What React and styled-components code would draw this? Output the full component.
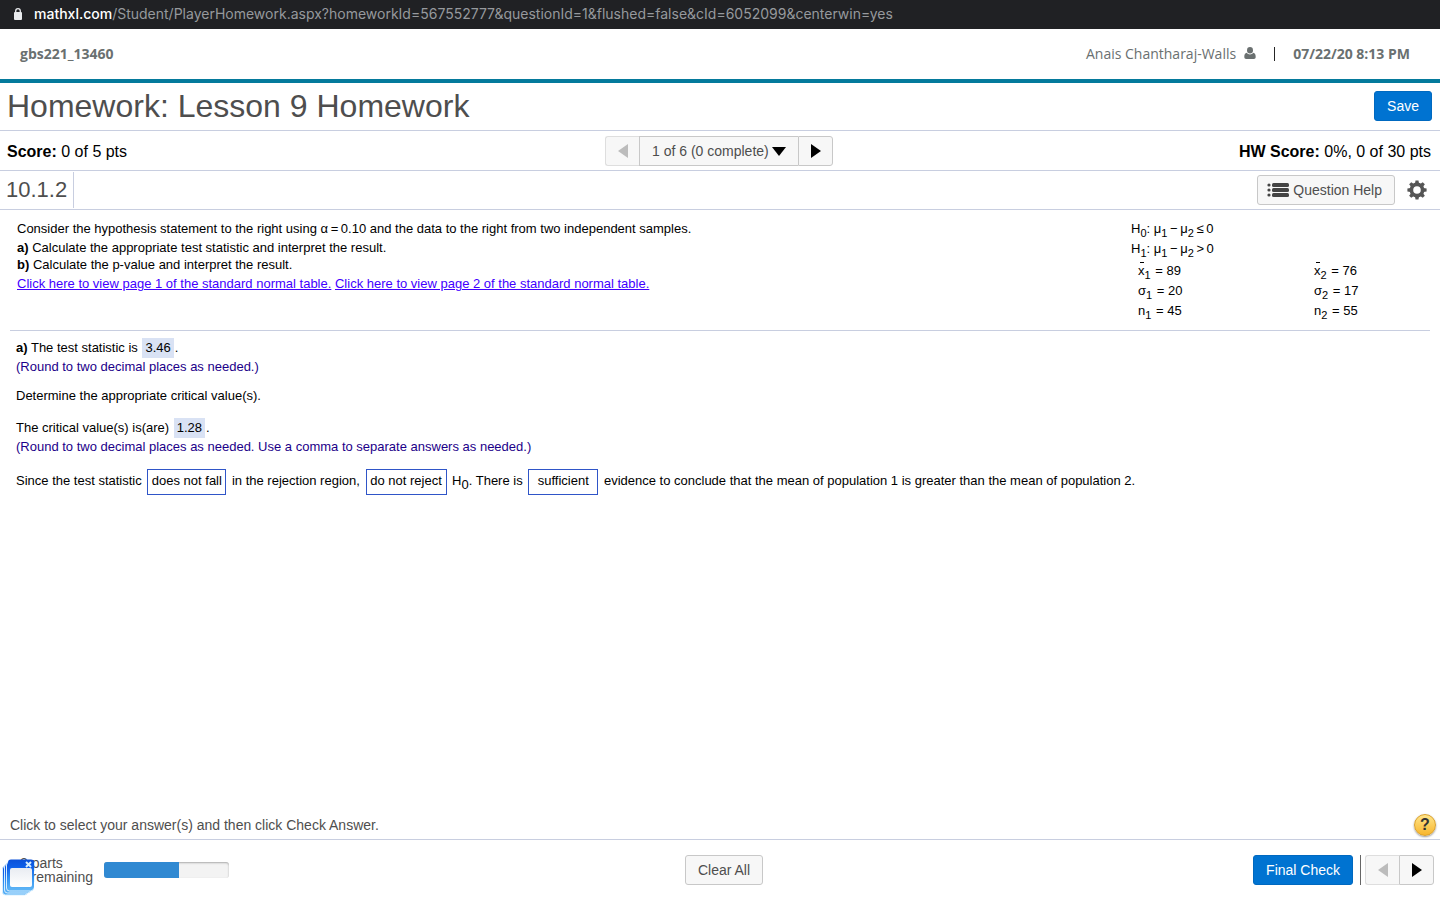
import React, { useState } from "react";
import styled, { createGlobalStyle } from "styled-components";

const GlobalStyle = createGlobalStyle`
  * {
    box-sizing: border-box;
  }
  body {
    margin: 0;
    background: #fff;
    color: #000;
    font-family: "Liberation Sans", Arial, sans-serif;
    font-size: 13px;
  }
  button, select, input {
    font-family: inherit;
    margin: 0;
  }
  h1, h2, p {
    margin: 0;
    font-weight: normal;
  }
`;

const rows = [
  { id: "x", symbol: "x", bar: true, first: 89, second: 76 },
  { id: "sigma", symbol: "σ", first: 20, second: 17 },
  { id: "n", symbol: "n", first: 45, second: 55 },
];

function Triangle({ dir }) {
  const points = {
    left: "10,0 10,14 0,7",
    right: "0,0 0,14 10,7",
  };
  return (
    <svg width="10" height="14" viewBox="0 0 10 14" aria-hidden="true">
      <polygon points={points[dir]} fill="currentColor" />
    </svg>
  );
}

function LockIcon() {
  return (
    <svg width="10" height="12" viewBox="0 0 10 12" aria-hidden="true">
      <rect x="1" y="4" width="8" height="8" rx="1" fill="#e8eaed" />
      <path d="M2.7 5V3a2.3 2.3 0 0 1 4.6 0v2" fill="none" stroke="#e8eaed" strokeWidth="1.3" />
    </svg>
  );
}

function PersonIcon() {
  return (
    <svg width="12" height="12" viewBox="0 0 12 12" fill="#6a7070" aria-hidden="true">
      <ellipse cx="6" cy="3.3" rx="3" ry="3.3" />
      <path d="M2.8 5.8C1 6.2.3 7.6.3 10c0 1.3.7 2 1.8 2h7.8c1.1 0 1.8-.7 1.8-2 0-2.4-.7-3.8-2.5-4.2C8.5 6.8 7.3 7.4 6 7.4S3.5 6.800 2.800 5.800z" />
    </svg>
  );
}

function ListIcon() {
  const lines = [0, 5, 10];
  return (
    <svg width="22" height="14" viewBox="0 0 22 14" fill="#444" aria-hidden="true">
      {lines.map((y) => (
        <g key={y}>
          <circle cx="2" cy={y + 2} r="1.6" />
          <rect x="5" y={y} width="17" height="4" rx="1.5" />
        </g>
      ))}
    </svg>
  );
}

function GearIcon() {
  const teeth = [0, 45, 90, 135, 180, 225, 270, 315];
  return (
    <svg width="20" height="20" viewBox="0 0 20 20" aria-hidden="true">
      <circle cx="10" cy="10" r="5.6" fill="none" stroke="#555" strokeWidth="3.6" />
      {teeth.map((t) => (
        <path key={t} d="M8 3.5 8.5.4h3l.5 3.1z" fill="#555" transform={`rotate(${t} 10 10)`} />
      ))}
    </svg>
  );
}

function WindowsIcon() {
  return (
    <svg width="34" height="37" viewBox="0 0 34 37" aria-hidden="true">
      <defs>
        <linearGradient id="frame" x1="0" y1="0" x2="0" y2="1">
          <stop offset="0" stopColor="#0a50d8" />
          <stop offset="0.25" stopColor="#0d5ee8" />
          <stop offset="0.6" stopColor="#2f8ff2" />
          <stop offset="1" stopColor="#5db4f5" />
        </linearGradient>
        <linearGradient id="pane" x1="0" y1="0" x2="0" y2="1">
          <stop offset="0" stopColor="#e9ecf2" />
          <stop offset="1" stopColor="#fff" />
        </linearGradient>
      </defs>
      <rect x="0.5" y="7" width="25" height="29" rx="3" fill="url(#frame)" stroke="#d8efff" />
      <rect x="2.5" y="5" width="26" height="29" rx="3" fill="url(#frame)" stroke="#d8efff" />
      <rect x="4.5" y="3" width="27" height="29" rx="3" fill="url(#frame)" stroke="#d8efff" />
      <rect x="6" y="0.5" width="26" height="30" rx="3" fill="url(#frame)" />
      <rect x="8" y="9" width="22" height="19" rx="2" fill="url(#pane)" />
      <path d="m24 3 5 5m0-5-5 5" stroke="#d8efff" strokeWidth="2" />
    </svg>
  );
}

function Mu({ n }) {
  return (
    <>
      μ<Sub>{n}</Sub>
    </>
  );
}

export default function App() {
  const [question, setQuestion] = useState("1");

  return (
    <Page>
      <GlobalStyle />
      <AddressBar>
        <LockIcon />
        <div>
          <b>mathxl.com</b>
          /Student/PlayerHomework.aspx?homeworkId=567552777&questionId=1&flushed=false&cId=6052099&centerwin=yes
        </div>
      </AddressBar>

      <CourseBar>
        <b>gbs221_13460</b>
        <UserInfo>
          <span>Anais Chantharaj-Walls</span>
          <PersonIcon />
          <Divider />
          <b>07/22/20 8:13 PM</b>
        </UserInfo>
      </CourseBar>

      <TitleBar>
        <h1>Homework: Lesson 9 Homework</h1>
        <Button $primary>Save</Button>
      </TitleBar>

      <ScoreBar>
        <p><b>Score:</b> 0 of 5 pts</p>
        <ButtonGroup>
          <Button $arrow disabled aria-label="Previous question"><Triangle dir="left" /></Button>
          <SelectWrap>
            <QuestionSelect
              aria-label="Question"
              value={question}
              onChange={(e) => setQuestion(e.target.value)}
            >
              <option value="1">1 of 6 (0 complete)</option>
            </QuestionSelect>
            <svg width="14" height="9" viewBox="0 0 14 9" aria-hidden="true">
              <polygon points="0,0 14,0 7,9" />
            </svg>
          </SelectWrap>
          <Button $arrow aria-label="Next question"><Triangle dir="right" /></Button>
        </ButtonGroup>
        <p><b>HW Score:</b> 0%, 0 of 30 pts</p>
      </ScoreBar>

      <ExerciseBar>
        <h2>10.1.2</h2>
        <Tools>
          <Button $withIcon><ListIcon />Question Help</Button>
          <IconButton aria-label="Settings"><GearIcon /></IconButton>
        </Tools>
      </ExerciseBar>

      <Main>
        <Problem>
          <Statement>
            <Line $h={20}>
              Consider the hypothesis statement to the right using α&thinsp;=&thinsp;0.10 and the data to the
              right from two independent samples.
            </Line>
            <Line $h={18}><b>a)</b> Calculate the appropriate test statistic and interpret the result.</Line>
            <Line $h={16}><b>b)</b> Calculate the p-value and interpret the result.</Line>
            <Line $h={22}>
              <TableLink href="#table1">Click here to view page 1 of the standard normal table.</TableLink>{" "}
              <TableLink href="#table2">Click here to view page 2 of the standard normal table.</TableLink>
            </Line>
          </Statement>
          <Data>
            <Line $h={20}>
              H<Sub>0</Sub>: <Mu n={1} />&thinsp;−&thinsp;<Mu n={2} />&thinsp;≤&thinsp;0
            </Line>
            <Line $h={20}>
              H<Sub>1</Sub>: <Mu n={1} />&thinsp;−&thinsp;<Mu n={2} />&thinsp;&gt;&thinsp;0
            </Line>
            <Samples>
              <tbody>
                {rows.map((row) => (
                  <tr key={row.id}>
                    <td><Symbol $bar={row.bar}>{row.symbol}</Symbol><Sub>1</Sub> = {row.first}</td>
                    <td><Symbol $bar={row.bar}>{row.symbol}</Symbol><Sub>2</Sub> = {row.second}</td>
                  </tr>
                ))}
              </tbody>
            </Samples>
          </Data>
        </Problem>

        <Work>
          <Line $h={20}><b>a)</b> The test statistic is <Answer>3.46</Answer>.</Line>
          <Line $h={18} $hint>(Round to two decimal places as needed.)</Line>
          <Gap $h={10} />
          <Line $h={20}>Determine the appropriate critical value(s).</Line>
          <Gap $h={12} />
          <Line $h={20}>The critical value(s) is(are) <Answer>1.28</Answer>.</Line>
          <Line $h={18} $hint>
            (Round to two decimal places as needed. Use a comma to separate answers as needed.)
          </Line>
          <Conclusion>
            Since the test statistic <Choice $w={79}>does not fall</Choice> in the rejection region,{" "}
            <Choice $w={81}>do not reject</Choice> H<Sub $large>0</Sub>. There is{" "}
            <Choice $w={70}>sufficient</Choice> evidence to conclude that the mean of population 1 is greater
            than the mean of population 2.
          </Conclusion>
        </Work>
      </Main>

      <HelpLine>
        <p>Click to select your answer(s) and then click Check Answer.</p>
        <HelpButton aria-label="Help">?</HelpButton>
      </HelpLine>

      <Footer>
        <Remaining>
          <PartsLabel>
            <span>2 parts</span>
            <span>remaining</span>
            <Overlay><WindowsIcon /></Overlay>
          </PartsLabel>
          <Progress><ProgressFill style={{ width: "60%" }} /></Progress>
        </Remaining>
        <Button>Clear All</Button>
        <FooterActions>
          <Button $primary>Final Check</Button>
          <FooterNav>
            <ButtonGroup>
              <Button $arrow disabled aria-label="Previous part"><Triangle dir="left" /></Button>
              <Button $arrow aria-label="Next part"><Triangle dir="right" /></Button>
            </ButtonGroup>
          </FooterNav>
        </FooterActions>
      </Footer>
    </Page>
  );
}

const Page = styled.div`
  min-height: 100vh;
  display: flex;
  flex-direction: column;
`;

const AddressBar = styled.div`
  height: 29px;
  padding: 0 13px 2px;
  display: flex;
  align-items: center;
  gap: 11px;
  background: #202124;
  color: #96999d;
  font-family: Inter, sans-serif;
  font-size: 14px;
  white-space: nowrap;

  b {
    color: #fff;
    font-weight: 500;
  }
`;

const CourseBar = styled.header`
  height: 54px;
  padding: 0 30px 2px 20px;
  display: flex;
  align-items: center;
  justify-content: space-between;
  border-bottom: 4px solid #047a9c;
  color: #6a7070;
  font-family: "Open Sans", sans-serif;
  font-size: 14px;
`;

const UserInfo = styled.div`
  display: flex;
  align-items: center;

  svg {
    margin: 0 18px 0 8px;
  }
`;

const Divider = styled.span`
  width: 1px;
  height: 14px;
  margin: 2px 18px 0 0;
  background: #252525;
`;

const TitleBar = styled.div`
  height: 48px;
  padding: 0 8px 2px 7px;
  display: flex;
  align-items: center;
  justify-content: space-between;
  border-bottom: 1px solid #c8cee0;

  h1 {
    padding-top: 2px;
    color: #4e4e4e;
    font-size: 32px;
  }
`;

const ScoreBar = styled.div`
  height: 40px;
  padding: 0 9px 0 7px;
  display: grid;
  grid-template-columns: 1fr auto 1fr;
  align-items: center;
  border-bottom: 1px solid #c8cee0;
  font-size: 16px;

  p {
    padding-top: 2px;
  }
  p:last-child {
    text-align: right;
  }
`;

const ExerciseBar = styled.div`
  height: 39px;
  padding-right: 13px;
  display: flex;
  align-items: center;
  justify-content: space-between;
  border-bottom: 1px solid #c8cee0;

  h2 {
    padding: 0 6px;
    border-right: 1px solid #c8cee0;
    color: #4e4e4e;
    font-size: 22px;
    line-height: 36px;
  }
`;

const Tools = styled.div`
  display: flex;
  align-items: center;
  gap: 12px;
`;

const Button = styled.button`
  height: 30px;
  padding: 0 12px;
  ${({ $withIcon }) => $withIcon && "padding-left: 9px;"}
  ${({ $arrow }) => $arrow && "padding: 0; width: 35px;"}
  display: inline-flex;
  align-items: center;
  justify-content: center;
  gap: 4px;
  border: 1px solid ${({ $primary }) => ($primary ? "#0069c0" : "#c8c8c8")};
  border-radius: 3px;
  background: ${({ $primary }) => ($primary ? "#0073d1" : "#f7f7f7")};
  color: ${({ $primary, $arrow }) => ($primary ? "#fff" : $arrow ? "#000" : "#4e4e4e")};
  font-size: 14px;
  font-weight: ${({ $primary }) => ($primary ? 500 : 400)};
  white-space: nowrap;
  cursor: pointer;

  &:disabled {
    border-color: #dedede;
    color: #bcbcbc;
    cursor: default;
  }
`;

const IconButton = styled.button`
  padding: 0;
  display: flex;
  border: 0;
  background: none;
  cursor: pointer;
`;

const ButtonGroup = styled.div`
  display: flex;

  > button:first-child {
    width: 34px;
    border-radius: 3px 0 0 3px;
    border-right: 0;
  }
  > button:last-child {
    border-radius: 0 3px 3px 0;
  }
`;

const SelectWrap = styled.div`
  display: grid;
  align-items: center;
  height: 30px;
  border: 1px solid #c8c8c8;
  border-right: 0;
  background: #f7f7f7;

  > * {
    grid-area: 1 / 1;
  }
  svg {
    justify-self: end;
    margin: 2px 12px 0 0;
    pointer-events: none;
  }
`;

const QuestionSelect = styled.select`
  appearance: none;
  height: 28px;
  padding: 0 29px 0 12px;
  border: 0;
  background: transparent;
  color: #4e4e4e;
  font-size: 14px;
`;

const Main = styled.main`
  flex: 1;
  padding: 9px 10px;
`;

const Problem = styled.section`
  display: flex;
  justify-content: space-between;
  min-height: 112px;
  padding: 0 0 0 7px;
  border-bottom: 1px solid #c8cee0;
`;

const Statement = styled.div`
  flex: 1;
`;

const Data = styled.div`
  width: 299px;
`;

const Line = styled.div`
  height: ${({ $h }) => $h}px;
  line-height: ${({ $h }) => $h}px;
  color: ${({ $hint }) => ($hint ? "#1c0089" : "inherit")};
`;

const TableLink = styled.a`
  color: #4200ff;
`;

const Sub = styled.sub`
  font-size: ${({ $large }) => ($large ? 13 : 11)}px;
  line-height: 0;
  vertical-align: -4px;
`;

const Samples = styled.table`
  width: 100%;
  margin-top: 2px;
  border-collapse: collapse;
  table-layout: fixed;

  td {
    height: 20px;
    padding: 0 0 0 7px;
    line-height: 20px;
    white-space: nowrap;
  }
  td:first-child {
    width: 176px;
  }
  sub {
    margin-right: 1px;
  }
`;

/* the mean bar sits clear of the letter, so it is not a text overline */
const Symbol = styled.span`
  position: relative;

  &::before {
    content: "";
    display: ${({ $bar }) => ($bar ? "block" : "none")};
    position: absolute;
    left: 2px;
    top: -1px;
    width: 4px;
    height: 1px;
    background: #000;
  }
`;

const Work = styled.section`
  padding: 7px 6px;
`;

const Gap = styled.div`
  height: ${({ $h }) => $h}px;
`;

const Answer = styled.span`
  display: inline-block;
  margin: 0 1px;
  padding: 0 3px;
  background: #d9e2f4;
  line-height: 20px;
`;

const Conclusion = styled.div`
  margin-top: 12px;
  line-height: 26px;
`;

const Choice = styled.button`
  width: ${({ $w }) => $w}px;
  height: 26px;
  margin: 0 2px;
  padding: 0 0 2px;
  border: 1px solid #2f55c8;
  background: #fff;
  font-size: 13px;
  cursor: pointer;
`;

const HelpLine = styled.div`
  height: 28px;
  padding: 0 4px 0 10px;
  display: flex;
  align-items: center;
  justify-content: space-between;
  color: #4e4e4e;
  font-size: 14px;
`;

const HelpButton = styled.button`
  width: 22px;
  height: 22px;
  padding: 0;
  border: 1px solid #d9a02c;
  border-radius: 50%;
  background: linear-gradient(#ffe58a, #f8b62d);
  box-shadow: 0 1px 2px rgba(0, 0, 0, 0.4);
  color: #333;
  font-size: 16px;
  font-weight: bold;
  line-height: 20px;
  cursor: pointer;
`;

const Footer = styled.footer`
  height: 61px;
  padding: 0 6px 0 14px;
  display: grid;
  grid-template-columns: 1fr auto 1fr;
  align-items: center;
  border-top: 1px solid #c8cee0;
`;

const Remaining = styled.div`
  display: flex;
  align-items: center;
  gap: 11px;
`;

const PartsLabel = styled.div`
  position: relative;
  width: 79px;
  display: flex;
  flex-direction: column;
  padding-left: 6px;
  color: #4e4e4e;
  font-size: 14px;
  line-height: 14px;

  span:last-of-type {
    align-self: flex-end;
  }
`;

const Overlay = styled.div`
  position: absolute;
  left: -12px;
  top: 3px;
  display: flex;
`;

const Progress = styled.div`
  width: 125px;
  height: 16px;
  overflow: hidden;
  border-radius: 3px;
  background: #f3f3f3;
  box-shadow: inset 0 1px 2px rgba(0, 0, 0, 0.3);
`;

const ProgressFill = styled.div`
  height: 100%;
  background: #3089d2;
`;

const FooterActions = styled.div`
  display: flex;
  justify-content: flex-end;
  gap: 7px;
`;

const FooterNav = styled.div`
  padding-left: 4px;
  border-left: 1px solid #666;
`;
